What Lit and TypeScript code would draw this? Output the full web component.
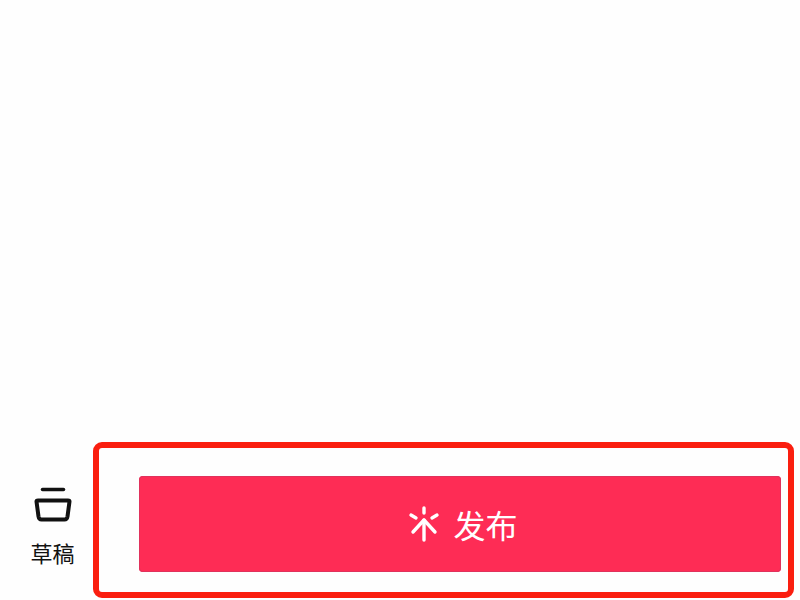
import { LitElement, html, css } from "lit";
import { customElement } from "lit/decorators.js";

@customElement("app-root")
export class AppRoot extends LitElement {
  static styles = css`
    :host {
      display: flex;
      flex-direction: column;
      justify-content: flex-end;
      width: 800px;
      height: 600px;
      background: #fefefe;
      font-family: "Noto Sans CJK SC", "Liberation Sans", sans-serif;
      overflow: hidden;
    }
    .bar {
      display: flex;
      align-items: stretch;
      padding: 0 6px 2px 0;
    }
    .draft {
      width: 93px;
      flex: none;
      box-sizing: border-box;
      padding: 44px 0 0 12px;
      display: flex;
      flex-direction: column;
      align-items: center;
      color: #111;
      font-size: 22px;
      line-height: 30px;
      gap: 13px;
    }
    .draft svg {
      display: block;
      width: 40px;
      height: 38px;
    }
    .frame {
      flex: 1;
      box-sizing: border-box;
      height: 156px;
      border: 6px solid #fa1e0f;
      border-radius: 9px;
      padding: 28px 7px 20px 40px;
    }
    .publish {
      height: 96px;
      border-radius: 4px;
      background: #fe2c55;
      box-shadow: inset 0 0 0 1px #e0325c;
      display: flex;
      align-items: center;
      justify-content: center;
      gap: 13px;
      color: #fff;
      font-size: 32px;
      padding-left: 6px;
    }
    .publish svg {
      display: block;
      width: 32px;
      height: 36px;
    }
  `;

  render() {
    return html`
      <div class="bar">
        <div class="draft">
          <svg viewBox="0 0 40 38" fill="none" stroke="#111" stroke-linecap="round" stroke-linejoin="round">
            <path d="M9.5 3.5H30.5" stroke-width="3.5" />
            <path d="M3.5 15.5Q3.5 14.5 5 14.5H35Q36.5 14.5 36.5 15.5L34.5 30.5Q34 33.5 31.5 33.5H8.5Q6 33.5 5.5 30.5Z" stroke-width="4" />
          </svg>
          <span>草稿</span>
        </div>
        <div class="frame">
          <div class="publish">
            <svg viewBox="0 0 32 36" fill="none" stroke="#fff" stroke-width="3.4" stroke-linecap="round">
              <path d="M16 2V7" />
              <path d="M3 9L8 12" />
              <path d="M29 9L24 12" />
              <path d="M16 15V34" />
              <path d="M16 14L5 26" />
              <path d="M16 14L27 26" />
            </svg>
            <span>发布</span>
          </div>
        </div>
      </div>
    `;
  }
}
